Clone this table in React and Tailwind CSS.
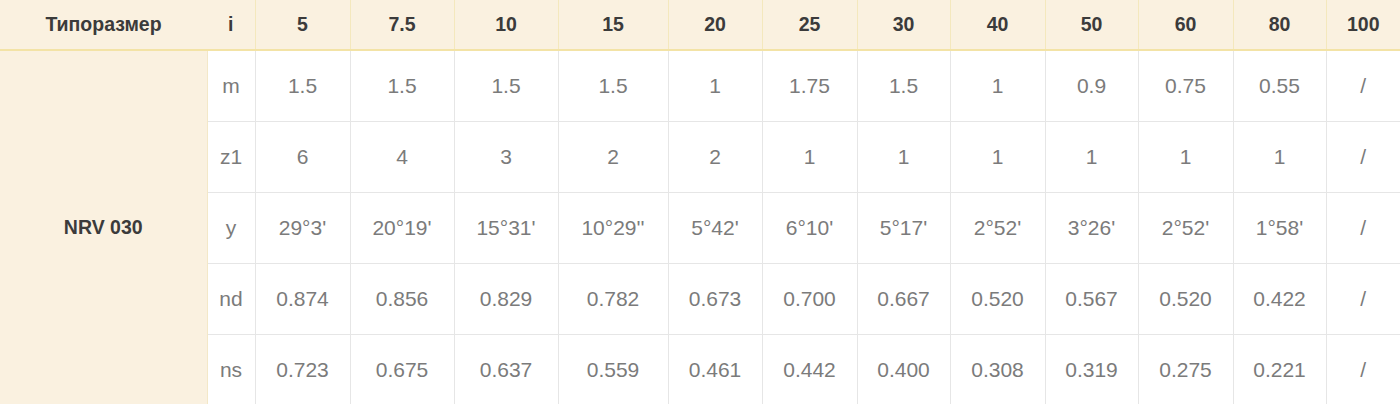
import React from "react";

const widths = [207, 48, 95, 104, 104, 110, 94, 95, 93, 95, 93, 95, 93, 74];
const heads = ["5", "7.5", "10", "15", "20", "25", "30", "40", "50", "60", "80", "100"];
const rows = [
  ["m", ["1.5", "1.5", "1.5", "1.5", "1", "1.75", "1.5", "1", "0.9", "0.75", "0.55", "/"]],
  ["z1", ["6", "4", "3", "2", "2", "1", "1", "1", "1", "1", "1", "/"]],
  ["y", ["29°3'", "20°19'", "15°31'", "10°29''", "5°42'", "6°10'", "5°17'", "2°52'", "3°26'", "2°52'", "1°58'", "/"]],
  ["nd", ["0.874", "0.856", "0.829", "0.782", "0.673", "0.700", "0.667", "0.520", "0.567", "0.520", "0.422", "/"]],
  ["ns", ["0.723", "0.675", "0.637", "0.559", "0.461", "0.442", "0.400", "0.308", "0.319", "0.275", "0.221", "/"]],
];

export default function App() {
  return (
    <div className="w-[1400px] h-[404px] overflow-hidden bg-white" style={{ fontFamily: '"Liberation Sans", Arial, sans-serif' }}>
      <table className="table-fixed border-collapse w-[1400px]">
        <colgroup>
          {widths.map((w, i) => (
            <col key={i} style={{ width: w }} />
          ))}
        </colgroup>
        <thead>
          <tr className="h-[50px] bg-[#faf1e0] text-[#3b3b3b] font-bold text-[19.5px]">
            <th className="border-b-2 border-b-[#f3e3a6] text-center font-bold p-0">Типоразмер</th>
            <th className="border-b-2 border-b-[#f3e3a6] text-center font-bold p-0">i</th>
            {heads.map((h, i) => (
              <th key={i} className="border-b-2 border-b-[#f3e3a6] border-l border-l-[#f4e8bd] text-center font-bold p-0">
                {h}
              </th>
            ))}
          </tr>
        </thead>
        <tbody className="text-[#7b7b7b] text-[21px]">
          {rows.map(([label, vals], r) => (
            <tr key={r} className="h-[71px]">
              {r === 0 && (
                <td rowSpan={5} className="bg-[#faf1e0] text-[#3b3b3b] text-[19.5px] font-bold text-center align-middle p-0 border-r border-r-[#f3e8c8]">
                  NRV 030
                </td>
              )}
              <td className="text-center p-0 border-b border-b-[#e6e6e6]">{label}</td>
              {vals.map((v, i) => (
                <td key={i} className="text-center p-0 border-b border-b-[#e6e6e6] border-l border-l-[#e6e6e6]">
                  {v}
                </td>
              ))}
            </tr>
          ))}
        </tbody>
      </table>
    </div>
  );
}
